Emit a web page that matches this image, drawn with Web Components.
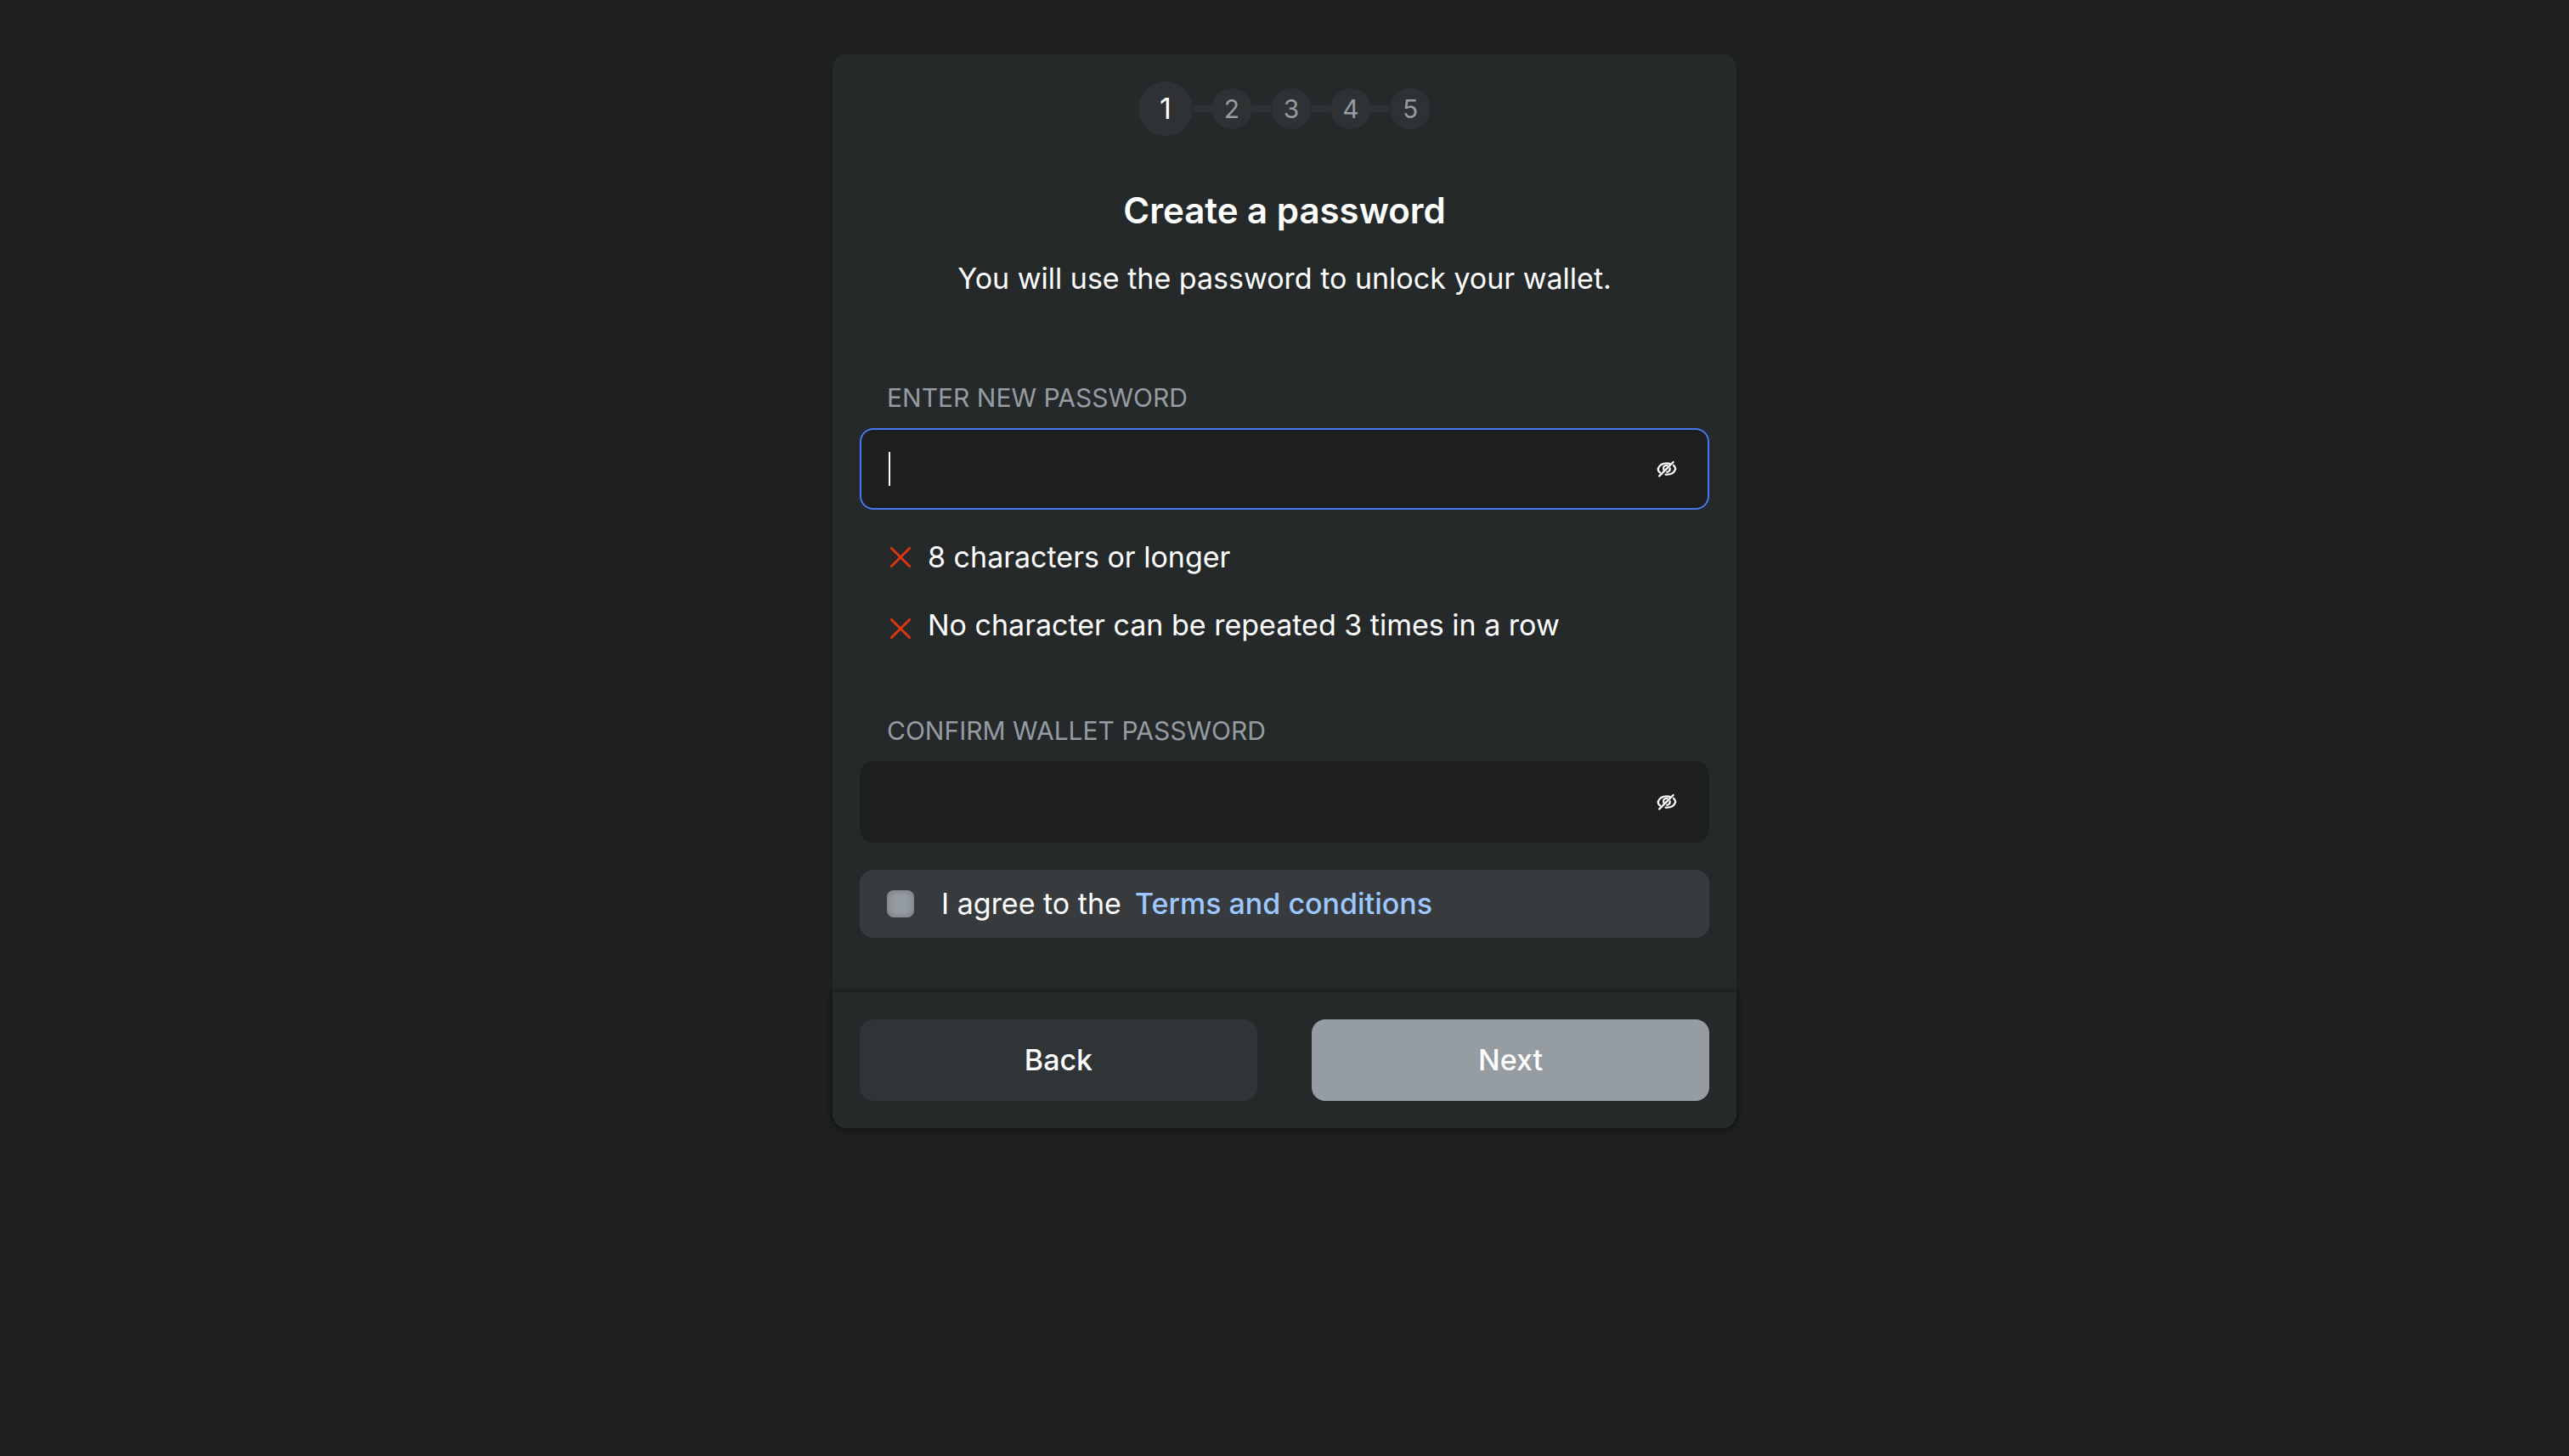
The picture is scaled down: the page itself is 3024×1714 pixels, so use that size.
<!DOCTYPE html>
<html lang="en">
<head>
<meta charset="utf-8">
<title>Create a password</title>
<style>
  body {
    margin: 0;
    min-height: 100vh;
    background: #1e1f21;
    color: #fff;
    font: 400 34px/48px Inter, "Open Sans", sans-serif;
  }
</style>
</head>
<body>
<wallet-setup></wallet-setup>

<script>
function define(name, html, setup) {
  const template = document.createElement('template');
  template.innerHTML = '<style>:host{display:block;box-sizing:border-box}*{box-sizing:border-box}</style>' + html;
  customElements.define(name, class extends HTMLElement {
    constructor() {
      super();
      this.attachShadow({ mode: 'open' }).append(template.content.cloneNode(true));
    }
    connectedCallback() { if (setup) setup(this, this.shadowRoot); }
  });
}

define('step-progress', `
  <style>
    ol { display: flex; align-items: center; justify-content: center; list-style: none; margin: 0; padding: 0; }
    li { display: flex; align-items: center; }
    li + li::before { content: ""; width: 22px; height: 8px; background: #2e3235; }
    span { display: grid; place-items: center; width: 48px; height: 48px; border-radius: 50%;
      background: #2e3235; color: #959ca2; font-size: 30px; }
    [aria-current] span { width: 64px; height: 64px; color: #fff; font-size: 34px; }
  </style>
  <ol></ol>`, (host, root) => {
  const current = +host.getAttribute('current');
  const list = root.querySelector('ol');
  for (let n = 1; n <= +host.getAttribute('total'); n++) {
    const item = document.createElement('li');
    if (n === current) item.setAttribute('aria-current', 'step');
    const dot = document.createElement('span');
    dot.textContent = n;
    item.append(dot);
    list.append(item);
  }
});

define('password-field', `
  <style>
    label { display: block; padding: 0 32px; color: #959ca2; font-size: 30px; line-height: 40px; margin-bottom: 16px; }
    .box { display: flex; align-items: center; height: 96px; padding: 0 32px; border: 2px solid #1e1f21;
      border-radius: 16px; background: #1e1f21; }
    :host([active]) .box { border-color: #4777f5; }
    input { flex: 1; min-width: 0; height: 40px; padding: 0; border: 0; outline: 0; background: none;
      color: #fff; font: inherit; caret-color: transparent; }
    :host([active]) input { background: linear-gradient(#fff, #fff) left center / 2px 40px no-repeat; }
    button { display: grid; place-items: center; width: 32px; height: 32px; padding: 0; border: 0; background: none; color: #fff; }
    svg { width: 24px; height: 24px; fill: none; stroke: currentColor; stroke-width: 2.3; stroke-linecap: round; stroke-linejoin: round; }
  </style>
  <label for="field"><slot></slot></label>
  <div class="box">
    <input id="field" type="password">
    <button type="button" aria-label="Show password">
      <svg viewBox="0 0 24 24">
        <path d="M4 16.3 C2.3 14.8 1.6 13.4 1.6 12 C3.2 7.6 7.2 5.3 12 5.3 C13.4 5.3 14.8 5.5 16 6"/>
        <path d="M20 7.8 C21.3 9 22 10.6 22.3 12 C20.9 16.3 16.8 18.7 12 18.7 L10.6 18.6"/>
        <path d="M8.2 12.7 C7.4 9.6 9.2 7.6 12.4 7.8"/>
        <path d="M12.2 15.6 C14.6 15.2 15.8 13.6 15.8 11.4"/>
        <path d="M3.2 20.4 L19.6 4"/>
      </svg>
    </button>
  </div>`);

define('password-rule', `
  <style>
    :host { display: flex; align-items: center; gap: 20px; padding: 0 36px; }
    svg { width: 24px; height: 24px; stroke: #e0360f; stroke-width: 2.8; stroke-linecap: round; }
    :host(:last-of-type) svg { margin-top: 8px; }
  </style>
  <svg viewBox="0 0 24 24" aria-hidden="true"><path d="M1.4 1.4L22.6 22.6M22.6 1.4L1.4 22.6"/></svg>
  <span><slot></slot></span>`);

define('terms-consent', `
  <style>
    :host { display: flex; align-items: center; height: 80px; padding: 0 32px; border-radius: 16px; background: #383b3e; }
    input { appearance: none; width: 32px; height: 32px; margin: 0 32px 0 0; border-radius: 8px;
      background: #959ca2; box-shadow: inset 0 0 8px rgba(0,0,0,.25); }
    label { margin-right: 16px; }
    a { color: #9dc8ff; font-weight: 500; text-decoration: none; }
  </style>
  <input id="agree" type="checkbox">
  <label for="agree">I agree to the</label>
  <a href="#terms">Terms and conditions</a>`);

define('action-button', `
  <style>
    :host { flex: 1; }
    button { width: 100%; height: 96px; border: 0; border-radius: 16px; background: #2f3437; color: #fff;
      font: inherit; font-weight: 500; }
    :host([muted]) button { background: #959ca2; }
  </style>
  <button type="button"><slot></slot></button>`);

define('wallet-setup', `
  <style>
    :host { padding: 64px 16px; }
    main { max-width: 1064px; margin: 0 auto; border-radius: 16px; background: #25292a; }
    form { padding: 32px 32px 64px; }
    h1 { margin: 64px 0 0; text-align: center; font-size: 42px; line-height: 48px; font-weight: 600; }
    p { margin: 32px 0 96px; text-align: center; }
    .rules { display: flex; flex-direction: column; gap: 32px; padding: 32px 0 80px; }
    terms-consent { margin-top: 32px; }
    footer { display: flex; gap: 64px; padding: 32px; border-radius: 0 0 16px 16px; background: #25292a;
      box-shadow: 0 0 8px rgba(0,0,0,.6); }
  </style>
  <main>
    <form>
      <step-progress current="1" total="5"></step-progress>
      <h1>Create a password</h1>
      <p>You will use the password to unlock your wallet.</p>
      <password-field active>ENTER NEW PASSWORD</password-field>
      <div class="rules">
        <password-rule>8 characters or longer</password-rule>
        <password-rule>No character can be repeated 3 times in a row</password-rule>
      </div>
      <password-field>CONFIRM WALLET PASSWORD</password-field>
      <terms-consent></terms-consent>
    </form>
    <footer>
      <action-button>Back</action-button>
      <action-button muted>Next</action-button>
    </footer>
  </main>`);
</script>
</body>
</html>
